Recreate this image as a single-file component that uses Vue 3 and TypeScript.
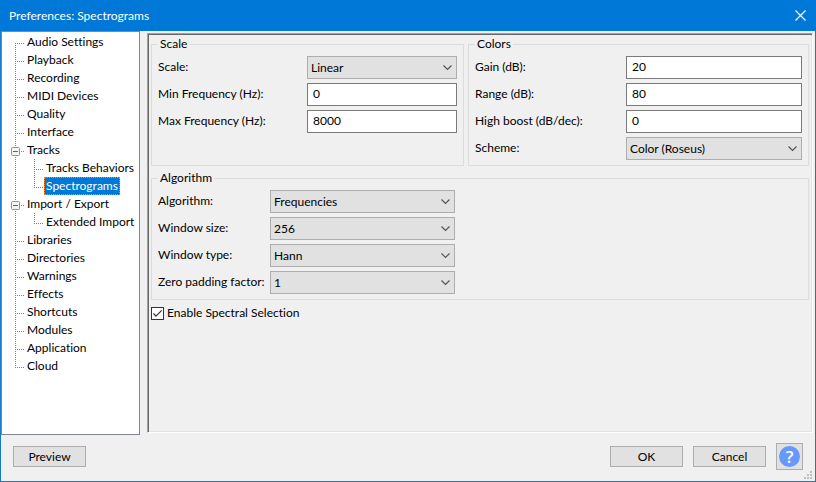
<script setup lang="ts">
import { ref } from 'vue'

interface TreeNode {
  name: string
  children?: string[]
}

interface Field {
  id: string
  label: string
  value: string
  options?: string[]
}

const tree: TreeNode[] = [
  { name: 'Audio Settings' },
  { name: 'Playback' },
  { name: 'Recording' },
  { name: 'MIDI Devices' },
  { name: 'Quality' },
  { name: 'Interface' },
  { name: 'Tracks', children: ['Tracks Behaviors', 'Spectrograms'] },
  { name: 'Import / Export', children: ['Extended Import'] },
  { name: 'Libraries' },
  { name: 'Directories' },
  { name: 'Warnings' },
  { name: 'Effects' },
  { name: 'Shortcuts' },
  { name: 'Modules' },
  { name: 'Application' },
  { name: 'Cloud' },
]

const selected = ref('Spectrograms')
const collapsed = ref<string[]>([])
const spectralSelection = ref(true)

const groups = ref<{ title: string; kind: string; fields: Field[] }[]>([
  {
    title: 'Scale',
    kind: 'scale',
    fields: [
      { id: 'scale', label: 'Scale:', value: 'Linear', options: ['Linear', 'Logarithmic', 'Mel', 'Bark', 'ERB', 'Period'] },
      { id: 'min-frequency', label: 'Min Frequency (Hz):', value: '0' },
      { id: 'max-frequency', label: 'Max Frequency (Hz):', value: '8000' },
    ],
  },
  {
    title: 'Colors',
    kind: 'colors',
    fields: [
      { id: 'gain', label: 'Gain (dB):', value: '20' },
      { id: 'range', label: 'Range (dB):', value: '80' },
      { id: 'high-boost', label: 'High boost (dB/dec):', value: '0' },
      { id: 'scheme', label: 'Scheme:', value: 'Color (Roseus)', options: ['Color (Roseus)', 'Color (classic)', 'Grayscale', 'Inverse grayscale'] },
    ],
  },
  {
    title: 'Algorithm',
    kind: 'algorithm',
    fields: [
      { id: 'algorithm', label: 'Algorithm:', value: 'Frequencies', options: ['Frequencies', 'Reassignment', 'Pitch (EAC)'] },
      { id: 'window-size', label: 'Window size:', value: '256', options: ['128', '256', '512', '1024', '2048'] },
      { id: 'window-type', label: 'Window type:', value: 'Hann', options: ['Rectangular', 'Hamming', 'Hann', 'Blackman'] },
      { id: 'zero-padding', label: 'Zero padding factor:', value: '1', options: ['1', '2', '4', '8'] },
    ],
  },
])

function toggle(name: string) {
  collapsed.value = collapsed.value.includes(name)
    ? collapsed.value.filter((n) => n !== name)
    : [...collapsed.value, name]
}
</script>

<template>
  <div class="dialog">
    <header class="titlebar">
      <h1>Preferences: Spectrograms</h1>
      <button class="close" type="button" aria-label="Close">
        <svg viewBox="0 0 11 11" width="11" height="11">
          <path d="M0.5 0.5 L10.5 10.5 M10.5 0.5 L0.5 10.5" />
        </svg>
      </button>
    </header>

    <main class="body">
      <nav class="tree">
        <ul>
          <li v-for="node in tree" :key="node.name" class="node">
            <div class="row">
              <button v-if="node.children" class="expander" type="button" :aria-label="node.name" @click="toggle(node.name)">
                <svg viewBox="0 0 9 9" width="9" height="9">
                  <rect class="box" x="0.5" y="0.5" width="8" height="8" rx="1" />
                  <path class="sign" d="M2 4.5 H7" />
                  <path v-if="collapsed.includes(node.name)" class="sign" d="M4.5 2 V7" />
                </svg>
              </button>
              <button class="item" :class="{ selected: selected === node.name }" type="button" @click="selected = node.name">{{ node.name }}</button>
            </div>
            <ul v-if="node.children && !collapsed.includes(node.name)" class="sub">
              <li v-for="child in node.children" :key="child" class="node">
                <div class="row">
                  <button class="item" :class="{ selected: selected === child }" type="button" @click="selected = child">{{ child }}</button>
                </div>
              </li>
            </ul>
          </li>
        </ul>
      </nav>

      <section class="panel">
        <div class="groups">
          <fieldset v-for="group in groups" :key="group.title" :class="group.kind">
            <legend>{{ group.title }}</legend>
            <div class="fields">
              <template v-for="field in group.fields" :key="field.id">
                <label :for="field.id">{{ field.label }}</label>
                <span v-if="field.options" class="dropdown">
                  <select :id="field.id" v-model="field.value">
                    <option v-for="option in field.options" :key="option">{{ option }}</option>
                  </select>
                  <svg viewBox="0 0 9 6" width="9" height="6">
                    <path d="M0.5 0.5 L4.5 4.5 L8.5 0.5" />
                  </svg>
                </span>
                <input v-else :id="field.id" v-model="field.value" type="text" />
              </template>
            </div>
          </fieldset>
        </div>
        <label class="check">
          <input v-model="spectralSelection" type="checkbox" />
          <svg v-show="spectralSelection" viewBox="0 0 13 13" width="13" height="13">
            <path d="M2.5 6.5 L5 9.2 L10.7 3.4" />
          </svg>
          <span>Enable Spectral Selection</span>
        </label>
      </section>
    </main>

    <footer class="footer">
      <button class="push" type="button">Preview</button>
      <span class="spacer"></span>
      <button class="push" type="button">OK</button>
      <button class="push" type="button">Cancel</button>
      <button class="help" type="button" aria-label="Help">
        <span>?</span>
      </button>
      <svg class="grip" viewBox="0 0 8 8" width="8" height="8">
        <path d="M6 0h2v2h-2z M3 3h2v2h-2z M6 3h2v2h-2z M0 6h2v2h-2z M3 6h2v2h-2z M6 6h2v2h-2z" />
      </svg>
    </footer>
  </div>
</template>

<style>
body {
  margin: 0;
}
</style>

<style scoped>
.dialog {
  box-sizing: border-box;
  display: flex;
  flex-direction: column;
  min-height: 100vh;
  border: 1px solid #1979ca;
  background: #f0f0f0;
  color: #000;
  font: 12px/16px "Segoe UI", Lato, "Open Sans", sans-serif;
  font-variant-ligatures: none;
}

button,
input,
select {
  box-sizing: border-box;
  margin: 0;
  font: inherit;
  font-variant-ligatures: none;
  color: inherit;
  border-radius: 0;
}

svg {
  display: block;
  fill: none;
}

ul {
  list-style: none;
  margin: 0;
  padding: 0;
}

.titlebar {
  box-sizing: border-box;
  display: flex;
  align-items: center;
  justify-content: space-between;
  height: 31px;
  margin: -1px -1px 0;
  padding: 0 10px 0 9px;
  background: #0078d7;
  color: #fff;
}

h1 {
  margin: 0;
  font: inherit;
}

.close {
  padding: 0;
  border: 0;
  background: none;
}

.close path {
  stroke: #fff;
  stroke-width: 1.2;
}

.body {
  flex: 1;
  display: flex;
  gap: 7px;
  padding-right: 2px;
}

.tree {
  box-sizing: border-box;
  width: 139px;
  padding: 1px 0 0 13px;
  border: 1px solid #828790;
  background: #fff;
}

.node {
  position: relative;
}

/* Dotted connectors between tree rows */
.node::before {
  content: "";
  position: absolute;
  left: 0;
  top: 0;
  bottom: 0;
  width: 1px;
  background: repeating-linear-gradient(#808080 0 1px, transparent 1px 2px);
}

ul > .node:first-child::before {
  top: 10px;
}

.sub > .node:first-child::before {
  top: 0;
}

.node:last-child::before {
  bottom: auto;
  height: 11px;
}

.row {
  position: relative;
  display: flex;
  height: 18px;
  padding-left: 10px;
}

.row::before {
  content: "";
  position: absolute;
  left: 0;
  top: 10px;
  width: 9px;
  height: 1px;
  background: repeating-linear-gradient(90deg, #808080 0 1px, transparent 1px 2px);
}

.sub {
  padding-left: 19px;
}

.expander {
  position: absolute;
  left: -4px;
  top: 6px;
  padding: 0;
  border: 0;
  background: #fff;
}

.expander .box {
  fill: #f4f4f4;
  stroke: #919191;
}

.expander .sign {
  stroke: #4b63a7;
}

.item {
  padding: 0 1px;
  border: 1px solid transparent;
  background: none;
  line-height: 16px;
  white-space: nowrap;
}

.item.selected {
  border: 1px dotted #ff8728;
  background: #0078d7;
  color: #fff;
}

.panel {
  flex: 1;
  min-width: 0;
  margin: 2px 0;
  padding: 1px 2px;
  border: 1px solid;
  border-color: #a0a0a0 #fff #fff #a0a0a0;
  box-shadow: inset 1px 1px #696969, inset -1px -1px #e3e3e3;
}

.groups {
  display: grid;
  grid-template-columns: 313fr 341fr;
  gap: 4px;
  padding: 1px 1px 0;
}

fieldset {
  min-width: 0;
  margin: 0;
  padding: 4px 6px 5px;
  border: 1px solid #dcdcdc;
}

legend {
  padding: 0 2px;
}

.algorithm {
  grid-column: 1 / -1;
}

.fields {
  display: grid;
  grid-template-columns: 149px 1fr;
  grid-auto-rows: 23px;
  gap: 4px 0;
}

.colors .fields {
  grid-template-columns: 151px 1fr;
}

.algorithm .fields {
  grid-template-columns: 112px 185px;
}

.fields label {
  line-height: 22px;
  white-space: nowrap;
}

.fields input {
  min-width: 0;
  width: 100%;
  padding: 0 5px 2px;
  border: 1px solid #7a7a7a;
  background: #fff;
}

.dropdown {
  position: relative;
  display: block;
}

.dropdown select {
  appearance: none;
  display: block;
  width: 100%;
  height: 23px;
  padding: 0 20px 0 3px;
  border: 1px solid #adadad;
  background: #e1e1e1;
}

.dropdown svg {
  position: absolute;
  right: 5px;
  top: 9px;
  pointer-events: none;
}

.dropdown path {
  stroke: #555;
  stroke-width: 1.2;
}

.check {
  position: relative;
  display: flex;
  align-items: center;
  gap: 3px;
  width: max-content;
  margin: 5px 1px 0;
}

.check input {
  appearance: none;
  width: 13px;
  height: 13px;
  border: 1px solid #333;
  background: #fff;
}

.check svg {
  position: absolute;
  left: 0;
  top: 2px;
  pointer-events: none;
}

.check path {
  stroke: #333;
  stroke-width: 1.2;
}

.footer {
  position: relative;
  display: flex;
  align-items: center;
  gap: 10px;
  height: 43px;
  padding: 0 12px 3px;
}

.spacer {
  flex: 1;
}

.push {
  width: 73px;
  height: 21px;
  padding: 0;
  border: 1px solid #adadad;
  background: #e1e1e1;
  line-height: 19px;
}

.help {
  display: grid;
  place-items: center;
  width: 27px;
  height: 27px;
  padding: 0;
  border: 1px solid #adadad;
  background: #e1e1e1;
}

.help span {
  width: 21px;
  height: 21px;
  border-radius: 50%;
  background: #6699ff;
  color: #fff;
  font-family: "Open Sans", sans-serif;
  font-size: 17px;
  font-weight: 600;
  line-height: 21px;
}

.grip {
  position: absolute;
  right: 3px;
  bottom: 2px;
}

.grip path {
  fill: #bfbfbf;
}
</style>
